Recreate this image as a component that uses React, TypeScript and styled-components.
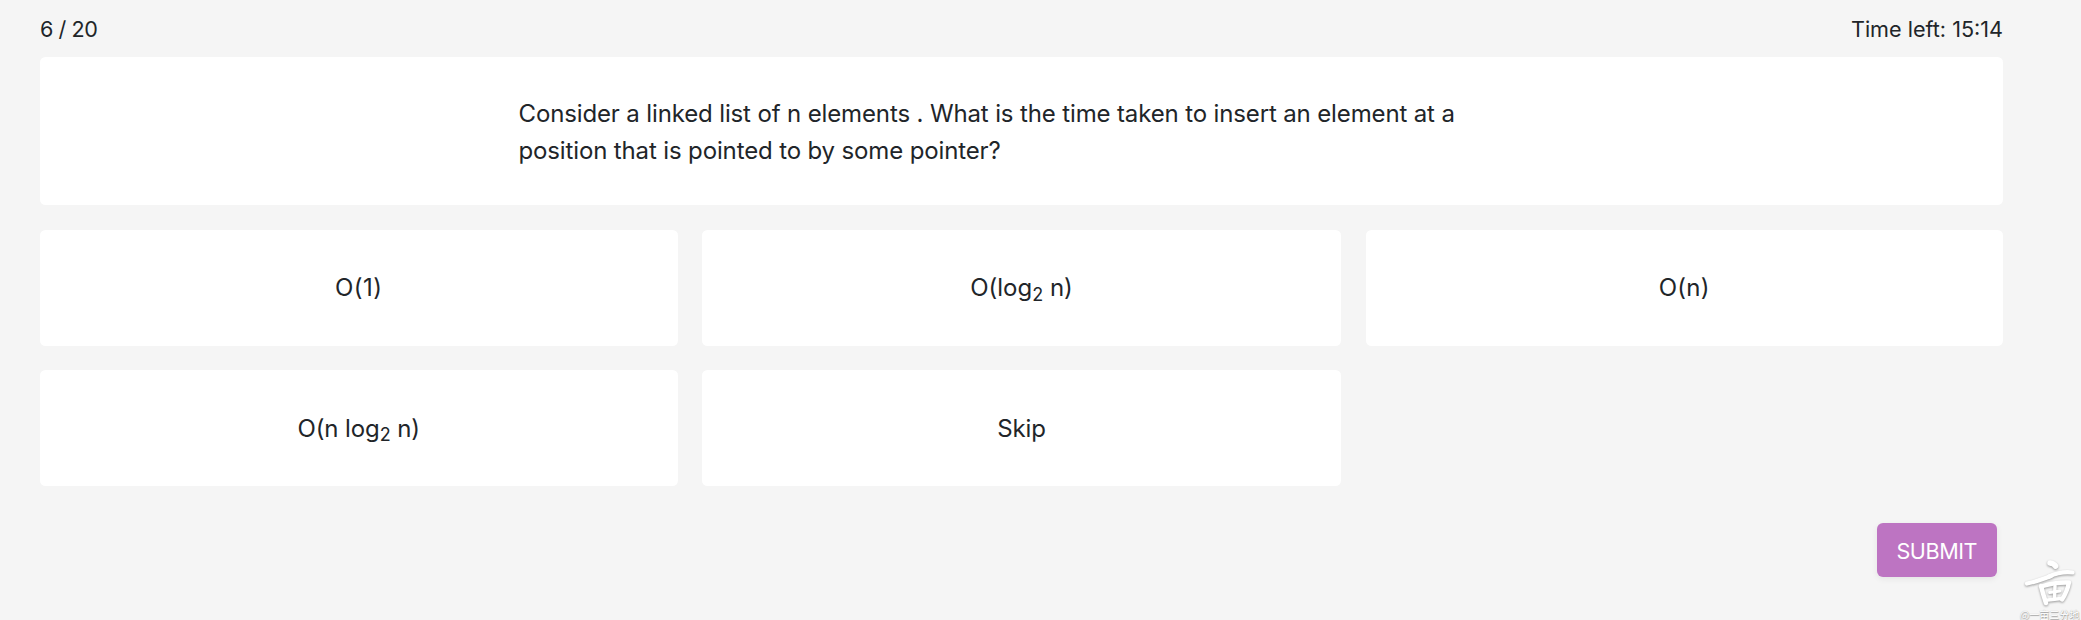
import React from 'react';
import styled, { createGlobalStyle } from 'styled-components';

const GlobalStyle = createGlobalStyle`
  * { box-sizing: border-box; }
  html, body { margin: 0; padding: 0; background: #f5f5f5; }
  body {
    font-family: Inter, "Liberation Sans", sans-serif;
    color: #212529;
    overflow: hidden;
  }
`;

const Page = styled.main`
  position: relative;
  width: 2081px;
  height: 620px;
  padding: 13px 78px 0 40px;
  display: flex;
  flex-direction: column;
  background: #f5f5f5;
`;

const StatusBar = styled.header`
  display: flex;
  justify-content: space-between;
  height: 44px;
  font-size: 21.6px;
  line-height: 32px;
`;

const Progress = styled.span`
  letter-spacing: -0.45px;
`;

const Timer = styled.span``;

const QuestionPanel = styled.section`
  display: flex;
  justify-content: center;
  height: 148px;
  padding-top: 38px;
  background: #fff;
  border-radius: 5.5px;
`;

const QuestionText = styled.p`
  width: 1006px;
  margin: 0;
  font-size: 24px;
  line-height: 37px;
  letter-spacing: -0.135px;
`;

const Options = styled.section`
  display: grid;
  grid-template-columns: 637.5px 639px 637.5px;
  grid-auto-rows: 116px;
  gap: 24.5px;
  margin-top: 24.6px;
`;

const Option = styled.div<{ $tracking: number }>`
  display: flex;
  align-items: center;
  justify-content: center;
  background: #fff;
  border-radius: 5.5px;
  font-size: 24px;
  line-height: 37px;
  letter-spacing: ${(p) => p.$tracking}px;
  cursor: pointer;

  sub {
    font-size: 18px;
    line-height: 0;
    position: relative;
    vertical-align: baseline;
    bottom: -0.25em;
  }
`;

const Actions = styled.footer`
  display: flex;
  justify-content: flex-end;
  padding: 37px 6px 0 0;
`;

const SubmitButton = styled.button`
  width: 120.5px;
  height: 54px;
  padding: 2px 0 0;
  border: 0;
  border-radius: 6px;
  background: #bd74c2;
  color: #fff;
  font: 400 21.6px/32px Inter, "Liberation Sans", sans-serif;
  letter-spacing: -0.44px;
  box-shadow: 0 2px 6px rgba(0, 0, 0, 0.07);
`;

const Watermark = styled.div`
  position: absolute;
  right: 2px;
  bottom: -1px;
  width: 59px;
  display: flex;
  flex-direction: column;
  align-items: center;
`;

const Mark = styled.svg`
  width: 54px;
  height: 50px;
  filter: drop-shadow(0.5px 1px 1px rgba(0, 0, 0, 0.38));
`;

const MarkCaption = styled.span`
  color: #fafafa;
  font: 500 10px/13px "Noto Sans CJK SC", sans-serif;
  white-space: nowrap;
  text-shadow: 0 0 1px rgba(0, 0, 0, 0.25), 0.5px 0.5px 1px rgba(0, 0, 0, 0.3);
`;

const options: { id: string; label: React.ReactNode; tracking: number }[] = [
  { id: 'constant', label: 'O(1)', tracking: 0.5 },
  { id: 'log', label: <span>O(log<sub>2</sub> n)</span>, tracking: 0 },
  { id: 'linear', label: 'O(n)', tracking: 0.3 },
  { id: 'nlog', label: <span>O(n log<sub>2</sub> n)</span>, tracking: -0.1 },
  { id: 'skip', label: 'Skip', tracking: -0.1 },
];

export default function App() {
  return (
    <>
      <GlobalStyle />
      <Page>
        <StatusBar>
          <Progress>6 / 20</Progress>
          <Timer>Time left: 15:14</Timer>
        </StatusBar>
        <QuestionPanel>
          <QuestionText>
            Consider a linked list of n elements . What is the time taken to insert an element at a
            position that is pointed to by some pointer?
          </QuestionText>
        </QuestionPanel>
        <Options>
          {options.map((o) => (
            <Option key={o.id} $tracking={o.tracking}>{o.label}</Option>
          ))}
        </Options>
        <Actions>
          <SubmitButton type="button">SUBMIT</SubmitButton>
        </Actions>
        <Watermark>
          <Mark viewBox="0 0 54 50" fill="none" stroke="#fff" strokeLinecap="round" strokeLinejoin="round">
            <path d="M27 5 Q31 5.5 32.5 8" strokeWidth="5.6" />
            <path d="M4 25.5 Q14 23.5 28 18" strokeWidth="4.2" />
            <path d="M26 18.5 Q38 13 49.5 14.5" strokeWidth="4.2" />
            <path d="M18 28 Q20 36 23 45" strokeWidth="4.6" />
            <path d="M20 28 Q32 24 46 24.5 Q44 34 39 41.5" strokeWidth="4.4" />
            <path d="M32 28 L31.5 40" strokeWidth="3.4" />
            <path d="M26.5 34.5 L37 33" strokeWidth="2.8" />
            <path d="M25 42 L38 40.5" strokeWidth="3.4" />
          </Mark>
          <MarkCaption>@一亩三分地</MarkCaption>
        </Watermark>
      </Page>
    </>
  );
}
